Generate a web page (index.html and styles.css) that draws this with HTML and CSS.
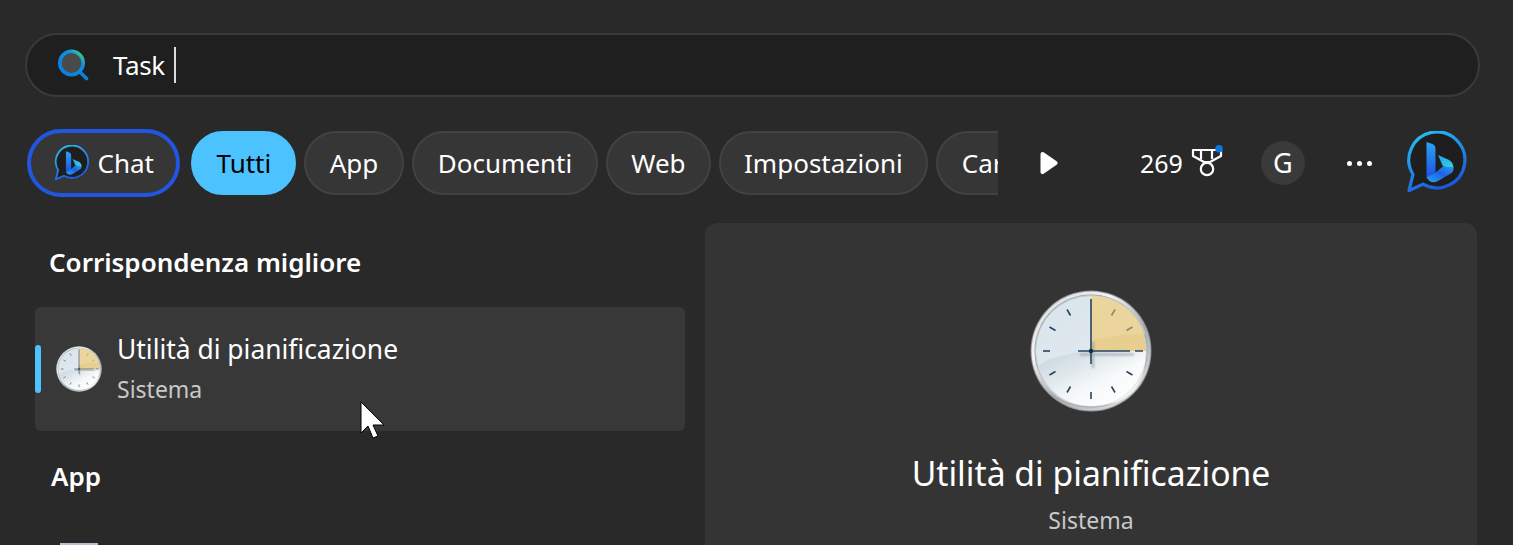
FILE: index.html
```html
<!DOCTYPE html>
<html lang="it">
<head>
    <meta charset="UTF-8">
    <meta name="viewport" content="width=device-width, initial-scale=1.0">
    <title>Ricerca</title>
    <link rel="stylesheet" href="styles.css">
</head>
<body>
    <svg class="sprite" aria-hidden="true">
        <defs>
            <linearGradient id="bingRing" x1="0.15" y1="0" x2="0.6" y2="1">
                <stop offset="0" stop-color="#26c0f2"/>
                <stop offset="1" stop-color="#1c55dc"/>
            </linearGradient>
            <linearGradient id="bingStem" x1="0" y1="0" x2="0" y2="1">
                <stop offset="0" stop-color="#2ba4f6"/>
                <stop offset="1" stop-color="#1c4fe0"/>
            </linearGradient>
            <linearGradient id="bingBowl" x1="0" y1="0" x2="1" y2="1">
                <stop offset="0" stop-color="#2a9cf0"/>
                <stop offset="1" stop-color="#30d8e0"/>
            </linearGradient>
            <linearGradient id="bingSwoosh" x1="0" y1="1" x2="1" y2="0">
                <stop offset="0" stop-color="#27a6ee"/>
                <stop offset="0.55" stop-color="#1f62e4"/>
                <stop offset="1" stop-color="#2a9af0"/>
            </linearGradient>
            <linearGradient id="searchRing" x1="0" y1="1" x2="1" y2="0">
                <stop offset="0" stop-color="#0a7fdc"/>
                <stop offset="0.7" stop-color="#0f8fe0"/>
                <stop offset="1" stop-color="#4fe070"/>
            </linearGradient>
            <linearGradient id="clockRim" x1="0.1" y1="0" x2="0.9" y2="1">
                <stop offset="0" stop-color="#d8d8d8"/>
                <stop offset="0.3" stop-color="#f4f4f4"/>
                <stop offset="0.6" stop-color="#a6a8aa"/>
                <stop offset="1" stop-color="#ececec"/>
            </linearGradient>
            <linearGradient id="clockFace" x1="0" y1="0" x2="0.8" y2="1">
                <stop offset="0" stop-color="#d8e4ec"/>
                <stop offset="0.55" stop-color="#dfe8ed"/>
                <stop offset="1" stop-color="#fbfcfc"/>
            </linearGradient>
            <linearGradient id="clockGloss" x1="0" y1="0.2" x2="0.7" y2="1">
                <stop offset="0" stop-color="#bccbd3" stop-opacity="0.5"/>
                <stop offset="0.6" stop-color="#ffffff" stop-opacity="0.5"/>
                <stop offset="1" stop-color="#ffffff" stop-opacity="0.8"/>
            </linearGradient>
            <filter id="clockBlur"><feGaussianBlur stdDeviation="0.9"/></filter>
            <symbol id="bing" viewBox="0 0 62 64">
                <path d="M7 43.5A28 28 0 1 1 17 53.2L3 59.5Z" fill="#1e1e1e" stroke="url(#bingRing)" stroke-width="3.2" stroke-linejoin="round"/>
                <path d="M20.5 11L26.5 13Q29.5 14.5 29.5 17.5V42L20.5 47.5Z" fill="url(#bingStem)"/>
                <path d="M32 24L42 28.5Q47.5 31 47.5 37L37 35.5Z" fill="url(#bingBowl)"/>
                <path d="M47.5 36.5V38Q47.5 41 44 43L32 50Q27 52.5 23.5 50L20.5 46.5L29.5 41.5L37 35.5Z" fill="url(#bingSwoosh)"/>
            </symbol>
            <symbol id="clock" viewBox="0 0 122 122">
                <circle cx="61" cy="61" r="60.5" fill="#8f9194"/>
                <circle cx="61" cy="61" r="59.5" fill="url(#clockRim)"/>
                <circle cx="61" cy="61" r="56.5" fill="#9ea3a8"/>
                <circle cx="61" cy="61" r="55.5" fill="url(#clockFace)" stroke="#b5c7d6" stroke-width="1"/>
                <path d="M61 6A55 55 0 0 1 116 61H61Z" fill="#e8cf90"/>
                <path d="M61 6A55 55 0 0 1 116 44Q80 44 61 51Z" fill="#efdcaa" opacity="0.5"/>
                <path d="M61 61H116Q116 116 61 116Q20 116 7 78Q14 66 61 61Z" fill="url(#clockGloss)"/>
                <path d="M63 52V78M50 64.5H104" stroke="#707a88" stroke-width="2.4" opacity="0.45" filter="url(#clockBlur)"/>
                <g stroke="#24455f" stroke-width="1.6">
                    <path d="M85 19.5L81.5 25.5" stroke="#8b8a60"/>
                    <path d="M102.5 37L96.5 40.5" stroke="#8b8a60"/>
                    <path d="M102.5 85L96.5 81.5"/>
                    <path d="M85 102.5L81.5 96.5"/>
                    <path d="M61 109V102"/>
                    <path d="M37 102.5L40.5 96.5"/>
                    <path d="M19.5 85L25.5 81.5"/>
                    <path d="M13 61H20"/>
                    <path d="M19.5 37L25.5 40.5"/>
                    <path d="M37 19.5L40.5 25.5"/>
                    <path d="M61 9V74"/>
                    <path d="M48 61H100M105 61H113"/>
                </g>
                <circle cx="61" cy="61" r="2.2" fill="#10304a"/>
            </symbol>
        </defs>
    </svg>

    <div class="search-box">
        <svg class="search-icon" viewBox="0 0 32 32" width="32" height="32">
            <path d="M23 23L29.5 29.5" stroke="#0a80d8" stroke-width="3.6" stroke-linecap="round"/>
            <circle cx="14.5" cy="14" r="11.7" fill="#4a4a4a" stroke="url(#searchRing)" stroke-width="3.6"/>
        </svg>
        <span class="search-text">Task</span>
        <span class="caret"></span>
    </div>

    <div class="toolbar">
        <div class="chips">
            <div class="chip chip-chat">
                <svg class="chat-icon"><use href="#bing"/></svg>
                <span>Chat</span>
            </div>
            <div class="chip chip-active">Tutti</div>
            <div class="chip">App</div>
            <div class="chip chip-docs">Documenti</div>
            <div class="chip chip-web">Web</div>
            <div class="chip">Impostazioni</div>
            <div class="chip">Cartelle</div>
        </div>
        <div class="actions">
            <svg class="play" viewBox="0 0 18 22" width="18" height="22">
                <path d="M2.5 2L15.5 11L2.5 20Z" fill="#fff" stroke="#fff" stroke-width="4" stroke-linejoin="round"/>
            </svg>
            <span class="points">269</span>
            <svg class="medal" viewBox="0 0 34 34" width="34" height="34">
                <g fill="none" stroke="#fff" stroke-width="2.2" stroke-linejoin="round">
                    <path d="M3 5H31V11L20 17H14L3 11Z"/>
                    <path d="M11 5V14M22 5V14"/>
                    <circle cx="17" cy="24" r="6.2"/>
                </g>
                <circle cx="29" cy="3.8" r="3.8" fill="#0a78e0"/>
            </svg>
            <div class="avatar">G</div>
            <div class="dots"><i></i><i></i><i></i></div>
            <svg class="bing-big"><use href="#bing"/></svg>
        </div>
    </div>

    <div class="main">
        <div class="results">
            <h2 class="section-title">Corrispondenza migliore</h2>
            <div class="result">
                <span class="result-mark"></span>
                <svg class="result-icon"><use href="#clock"/></svg>
                <div class="result-text">
                    <div class="result-name">Utilità di pianificazione</div>
                    <div class="result-type">Sistema</div>
                </div>
            </div>
            <h2 class="section-title section-app">App</h2>
            <div class="app-icon"></div>
        </div>
        <div class="preview">
            <svg class="preview-icon"><use href="#clock"/></svg>
            <div class="preview-name">Utilità di pianificazione</div>
            <div class="preview-type">Sistema</div>
        </div>
    </div>

    <svg class="cursor" viewBox="0 0 26 38" width="26" height="38">
        <path d="M1 1V32L8 25L13 37L18 35L13 24H24Z" fill="#fff" stroke="#000" stroke-width="1"/>
    </svg>
</body>
</html>
```

FILE: styles.css
```css
html, body {
    height: 545px;
    overflow: hidden;
}

body {
    margin: 0;
    position: relative;
    font-family: "Noto Sans", "Open Sans", sans-serif;
    background-color: #292929;
    color: #fff;
}

.sprite {
    position: absolute;
    width: 0;
    height: 0;
}

/* barra di ricerca */
.search-box {
    display: flex;
    align-items: center;
    box-sizing: border-box;
    height: 64px;
    margin: 33px 33px 0 25px;
    padding-left: 30px;
    background-color: #1f1f1f;
    border: 2px solid #3a3a3a;
    border-radius: 32px;
}

.search-icon {
    flex: none;
    margin-right: 24px;
}

.search-text {
    font-size: 26px;
    letter-spacing: -0.4px;
}

.caret {
    width: 2px;
    height: 36px;
    margin-left: 9px;
    background-color: #dcdcdc;
}

/* filtri */
.toolbar {
    display: flex;
    align-items: center;
    height: 68px;
    margin: 32px 0 0 27px;
}

.chips {
    display: flex;
    align-items: center;
    flex: none;
    width: 971px;
    gap: 8px;
    overflow: hidden;
}

.chip {
    flex: none;
    box-sizing: border-box;
    height: 64px;
    line-height: 60px;
    padding: 0 23.5px;
    font-size: 26px;
    background-color: #363636;
    border: 2px solid #424242;
    border-radius: 32px;
}

.chip-chat {
    display: flex;
    align-items: center;
    height: 68px;
    padding: 0 22.5px;
    border: 4px solid #2156e0;
    border-radius: 34px;
    margin-right: 3px;
}

.chat-icon {
    width: 36px;
    height: 37px;
    margin-right: 8px;
}

.chip-active {
    padding: 0 23px;
    background-color: #4cc2ff;
    border-color: #4cc2ff;
    color: #000;
}

.chip-docs {
    padding: 0 24px;
}

.chip-web {
    padding: 0 23px;
}

.actions {
    display: flex;
    align-items: center;
    flex: none;
}

.play {
    margin-left: 42px;
}

.points {
    margin-left: 82px;
    font-size: 25px;
}

.medal {
    margin-left: 7px;
    margin-top: -2px;
}

.avatar {
    width: 44px;
    height: 44px;
    margin-left: 37px;
    line-height: 44px;
    text-align: center;
    font-size: 27px;
    background-color: #3a3a3a;
    border-radius: 50%;
}

.dots {
    display: flex;
    gap: 5px;
    margin-left: 42px;
}

.dots i {
    width: 5px;
    height: 5px;
    background-color: #fff;
    border-radius: 50%;
}

.bing-big {
    width: 62px;
    height: 64px;
    margin-left: 34px;
}

/* risultati */
.main {
    display: grid;
    grid-template-columns: 650px 772px;
    gap: 20px;
    height: 322px;
    margin: 26px 0 0 35px;
    overflow: hidden;
}

.section-title {
    margin: 0;
    padding: 21px 0 27px 14px;
    font-size: 26px;
    line-height: 36px;
    font-weight: 600;
}

.section-app {
    padding: 27px 0 0 16px;
}

.result {
    position: relative;
    display: flex;
    align-items: center;
    box-sizing: border-box;
    height: 124px;
    padding-left: 21px;
    background-color: #383838;
    border-radius: 6px;
}

.result-mark {
    position: absolute;
    left: 0;
    top: 38px;
    width: 6px;
    height: 48px;
    background-color: #4cc2ff;
    border-radius: 3px;
}

.result-icon {
    flex: none;
    width: 46px;
    height: 46px;
    margin-right: 15px;
}

.result-text {
    align-self: flex-start;
    padding-top: 24px;
}

.result-name {
    font-size: 26.4px;
    line-height: 36px;
}

.result-type {
    margin-top: 7px;
    font-size: 23px;
    line-height: 30px;
    color: #c8c8c8;
}

.app-icon {
    width: 38px;
    height: 38px;
    margin: 49px 0 0 25px;
    background-color: #b4c0d0;
}

.preview {
    display: flex;
    flex-direction: column;
    align-items: center;
    background-color: #343434;
    border-radius: 12px 12px 0 0;
}

.preview-icon {
    flex: none;
    width: 122px;
    height: 122px;
    margin-top: 67px;
}

.preview-name {
    margin-top: 38px;
    font-size: 33.7px;
    line-height: 46px;
}

.preview-type {
    margin-top: 9px;
    font-size: 23px;
    line-height: 30px;
    color: #c8c8c8;
}

.cursor {
    position: absolute;
    left: 360px;
    top: 401px;
}
```
